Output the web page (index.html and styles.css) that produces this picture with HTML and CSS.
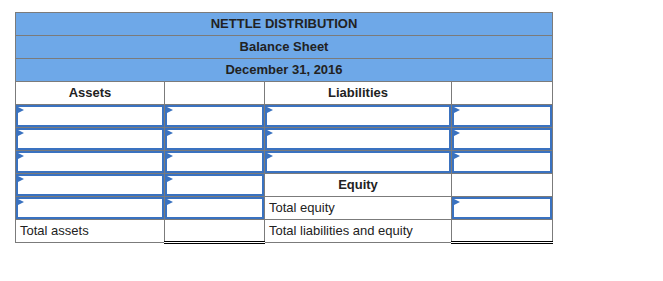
FILE: index.html
```html
<!DOCTYPE html>
<html>
<head>
<meta charset="utf-8">
<link rel="stylesheet" href="styles.css">
</head>
<body>
<table class="sheet">
  <colgroup>
    <col class="c1"><col class="c2"><col class="c3"><col class="c4">
  </colgroup>
  <tr><td class="head" colspan="4">NETTLE DISTRIBUTION</td></tr>
  <tr><td class="head" colspan="4">Balance Sheet</td></tr>
  <tr><td class="head" colspan="4">December 31, 2016</td></tr>
  <tr><td class="label">Assets</td><td></td><td class="label">Liabilities</td><td></td></tr>
  <tr><td class="inp"></td><td class="inp"></td><td class="inp"></td><td class="inp"></td></tr>
  <tr><td class="inp"></td><td class="inp"></td><td class="inp"></td><td class="inp"></td></tr>
  <tr><td class="inp"></td><td class="inp"></td><td class="inp"></td><td class="inp"></td></tr>
  <tr><td class="inp"></td><td class="inp"></td><td class="label">Equity</td><td></td></tr>
  <tr><td class="inp"></td><td class="inp"></td><td class="text">Total equity</td><td class="inp"></td></tr>
  <tr><td class="text">Total assets</td><td class="total"></td><td class="text">Total liabilities and equity</td><td class="total"></td></tr>
</table>
</body>
</html>
```

FILE: styles.css
```css
html, body {
  margin: 0;
  padding: 0;
  background: #ffffff;
}
body {
  padding: 12px 0 0 15px;
  font-family: "Liberation Sans", Arial, sans-serif;
  font-size: 13px;
  color: #222222;
}
.sheet {
  border-collapse: collapse;
  table-layout: fixed;
  width: 537px;
}
.c1 { width: 149px; }
.c2 { width: 100px; }
.c3 { width: 187px; }
.c4 { width: 101px; }
.sheet td {
  border: 1px solid #7b7b7b;
  height: 22px;
  padding: 0 4px 2px;
  box-sizing: border-box;
  vertical-align: middle;
  position: relative;
  line-height: 15px;
}
.sheet tr { height: 23px; }
.head {
  background: #6ea8e8;
  text-align: center;
  font-weight: bold;
}
.label {
  text-align: center;
  font-weight: bold;
}
.text {
  text-align: left;
}
.inp {
  box-shadow: inset 0 0 0 2px #3a72c0;
}
.inp::before {
  content: "";
  position: absolute;
  left: 2px;
  top: 2px;
  border-style: solid;
  border-width: 3px 0 3px 6px;
  border-color: transparent transparent transparent #3a72c0;
}
.sheet td.total {
  border-top: 1px solid #000000;
  border-bottom: 3px double #000000;
}
```
